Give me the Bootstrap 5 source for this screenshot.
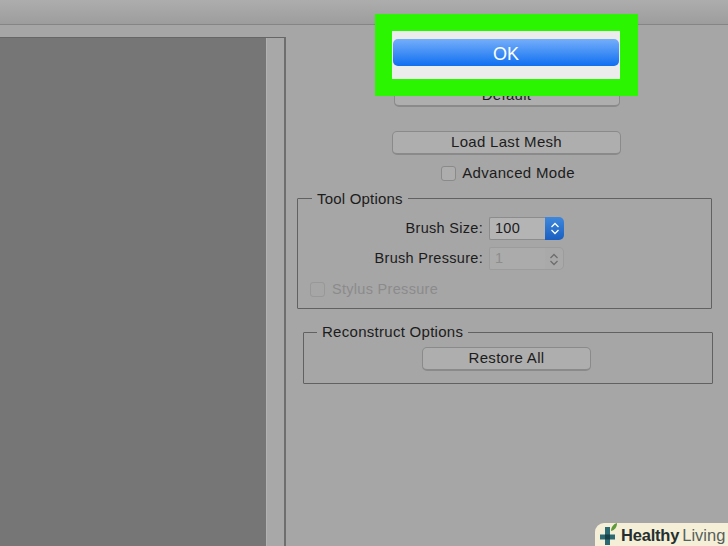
<!DOCTYPE html>
<html lang="en">
<head>
<meta charset="UTF-8">
<meta name="viewport" content="width=device-width, initial-scale=1.0">
<title>Mesh tool dialog</title>
<link href="https://cdn.jsdelivr.net/npm/bootstrap@5.3.0/dist/css/bootstrap.min.css" rel="stylesheet">
<style>
  html, body { height: 100%; }
  body {
    width: 728px;
    height: 546px;
    overflow: hidden;
    position: relative;
    background: #a6a6a6;
    font-family: "Liberation Sans", Arial, sans-serif;
    font-size: 14.5px;
    color: #1c1c1c;
    letter-spacing: .3px;
  }
  .title-strip {
    height: 25px;
    background: linear-gradient(#adadad, #9d9d9d);
    border-bottom: 1px solid #858585;
  }
  .work-area { height: 521px; }
  .canvas-col {
    width: 286px;
    margin-top: 12px;
    border-top: 1px solid #666;
    border-right: 2px solid #6e6e6e;
  }
  .canvas-view { width: 266px; background: #767676; }
  .canvas-strip { flex: 1; background: #a8a8a8; border-left: 1px solid #b2b2b2; }
  .side-col { width: 442px; }
  .top-stack { width: 229px; margin-left: 106px; padding-top: 14px; }
  .mac-btn {
    display: block;
    background: #aeaeae;
    border: 1px solid #8a8a8a;
    border-bottom-width: 2px;
    border-radius: 5px;
    color: #1c1c1c;
    font-size: 15px;
    letter-spacing: .3px;
    line-height: 1;
    padding: 0 0 2px;
    text-align: center;
  }
  .default-btn { width: 226px; height: 68px; margin: 0 auto 24px; padding-top: 45px; }
  .mesh-btn { width: 229px; height: 24px; }
  .check-box {
    width: 15px;
    height: 15px;
    border: 1px solid #8a8a8a;
    border-radius: 3px;
    background: #adadad;
  }
  .check-row { height: 15px; margin-top: 11px; gap: 6px; }
  .adv-row { margin-left: 3px; }
  .adv-label { font-size: 15px; letter-spacing: .33px; }
  .check-row.dim { color: #8b8b8b; margin-top: 12px; margin-left: -1px; gap: 7px; }
  .check-row.dim .check-box { border-color: #989898; background: #a6a6a6; }
  .group-box {
    position: relative;
    border: 1px solid #616161;
    border-radius: 1px;
  }
  .group-title {
    position: absolute;
    top: -10px;
    line-height: 19px;
    background: #a6a6a6;
    padding: 0 5px;
    font-size: 15px;
    letter-spacing: .2px;
  }
  .tool-group { margin: 17px 16px 0 11px; height: 111px; padding: 18px 0 0 13px; }
  .tool-group .group-title { left: 14px; }
  .rebuild-group .group-title { top: -11px; letter-spacing: .28px; }
  .field-row { height: 23px; margin-bottom: 7px; }
  .field-label { width: 178px; text-align: right; padding-right: 6px; }
  .num-field {
    width: 56px;
    height: 23px;
    line-height: 21px;
    padding-left: 5px;
    background: #b4b4b4;
    border: 1px solid #8c8c8c;
    border-right: 0;
    border-radius: 2px 0 0 2px;
  }
  .num-field.dim { background: #ababab; color: #8d8d8d; border-color: #9c9c9c; }
  .step-btn {
    width: 19px;
    height: 23px;
    border-radius: 0 5px 5px 0;
    background: linear-gradient(#3f87dc, #1a5fc0);
  }
  .step-btn.dim { background: #a9a9a9; border: 1px solid #9c9c9c; border-left: 0; }
  .step-btn svg { display: block; margin: 4px auto 0; }
  .rebuild-group { margin: 23px 15px 0 17px; height: 52px; }
  .rebuild-group .group-title { left: 13px; }
  .restore-btn { width: 169px; height: 24px; margin: 14px 0 0 118px; }
  .ok-mark {
    position: absolute;
    left: 375px;
    top: 14px;
    width: 263px;
    height: 82px;
    border: 17px solid #2bf500;
    border-right-width: 18px;
    background: #ececec;
    padding-top: 8px;
  }
  .ok-btn {
    display: block;
    width: 226px;
    height: 27px;
    margin-left: 1px;
    padding: 2px 0 0;
    border: 0;
    border-radius: 5px;
    background: linear-gradient(#74aefa, #3d8cf5 55%, #0f6ef0);
    color: #fff;
    font-size: 18px;
    letter-spacing: 0;
  }
  .brand-tag {
    position: absolute;
    right: 0;
    bottom: 0;
    width: 133px;
    height: 23px;
    background: #f6efd8;
    border-radius: 9px 0 0 0;
    font-size: 16.5px;
    line-height: 24px;
    letter-spacing: 0;
    white-space: nowrap;
  }
  .brand-tag svg { margin-right: 3px; }
  .brand-tag b { color: #24302f; letter-spacing: -.2px; }
  .brand-tag span { color: #55605c; margin-left: 3px; }
</style>
</head>
<body>

<div class="title-strip"></div>

<div class="work-area d-flex">
  <div class="canvas-col d-flex">
    <div class="canvas-view"></div>
    <div class="canvas-strip"></div>
  </div>

  <div class="side-col">
    <div class="top-stack">
      <button class="mac-btn default-btn" type="button">Default</button>
      <button class="mac-btn mesh-btn" type="button">Load Last Mesh</button>
      <div class="check-row adv-row d-flex align-items-center justify-content-center">
        <span class="check-box"></span><span class="adv-label">Advanced Mode</span>
      </div>
    </div>

    <div class="group-box tool-group">
      <div class="group-title">Tool Options</div>
      <div class="field-row d-flex align-items-center">
        <div class="field-label">Brush Size:</div>
        <div class="num-field">100</div>
        <div class="step-btn">
          <svg width="10" height="15" viewBox="0 0 10 15" fill="none" stroke="#fff" stroke-width="1.3"><path d="M1.500 6L5 2.500 8.500 6M1.500 9L5 12.500 8.500 9"/></svg>
        </div>
      </div>
      <div class="field-row d-flex align-items-center">
        <div class="field-label">Brush Pressure:</div>
        <div class="num-field dim">1</div>
        <div class="step-btn dim">
          <svg width="10" height="15" viewBox="0 0 10 15" fill="none" stroke="#6d6d6d" stroke-width="1.3"><path d="M1.500 6L5 2.500 8.500 6M1.500 9L5 12.500 8.500 9"/></svg>
        </div>
      </div>
      <div class="check-row dim d-flex align-items-center">
        <span class="check-box"></span><span>Stylus Pressure</span>
      </div>
    </div>

    <div class="group-box rebuild-group">
      <div class="group-title">Reconstruct Options</div>
      <button class="mac-btn restore-btn" type="button">Restore All</button>
    </div>
  </div>
</div>

<div class="ok-mark">
  <button class="ok-btn" type="button">OK</button>
</div>

<div class="brand-tag d-flex align-items-center">
  <svg width="23" height="23" viewBox="0 0 23 23" class="flex-shrink-0">
    <path d="M5 11.5h5V4h5v7.500h5v5h-5V22h-5v-5.500H5z" fill="#2b6a72"/>
    <rect x="10" y="11.500" width="5" height="5" fill="#173f46"/>
    <path d="M16 8c0-4 2.500-7 6-8 0 4-2 7-6 8z" fill="#5f9a3a"/>
  </svg>
  <b>Healthy</b><span>Living</span>
</div>

<script src="https://cdn.jsdelivr.net/npm/bootstrap@5.3.0/dist/js/bootstrap.bundle.min.js"></script>
</body>
</html>
